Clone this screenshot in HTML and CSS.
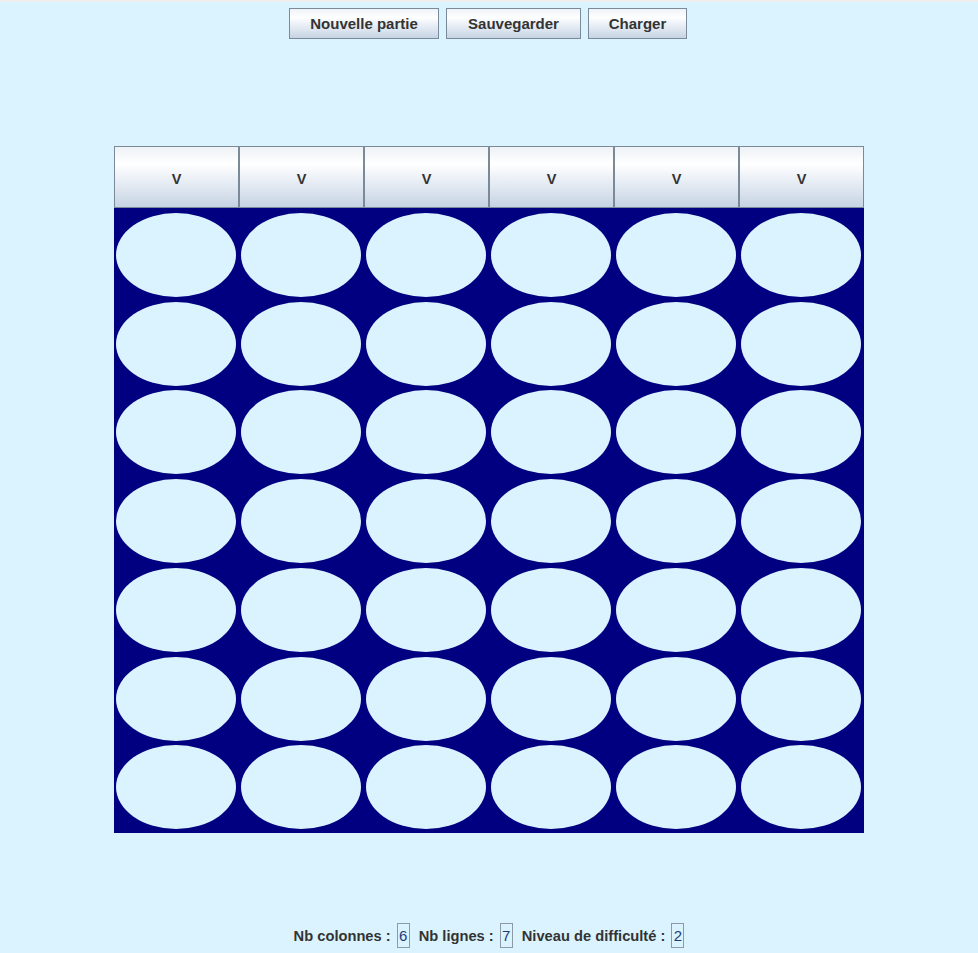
FILE: index.html
```html
<!DOCTYPE html>
<html lang="fr">
<head>
<meta charset="utf-8">
<title>Puissance 4</title>
<link rel="stylesheet" href="styles.css">
</head>
<body>
<div class="strip"></div>
<div class="toolbar">
  <button class="btn btn-new">Nouvelle partie</button>
  <button class="btn btn-save">Sauvegarder</button>
  <button class="btn btn-load">Charger</button>
</div>
<div class="board">
  <div class="header">
    <button class="col-btn">V</button>
    <button class="col-btn">V</button>
    <button class="col-btn">V</button>
    <button class="col-btn">V</button>
    <button class="col-btn">V</button>
    <button class="col-btn">V</button>
  </div>
  <div class="grid">
    <div class="cell"><div class="hole"></div></div><div class="cell"><div class="hole"></div></div><div class="cell"><div class="hole"></div></div><div class="cell"><div class="hole"></div></div><div class="cell"><div class="hole"></div></div><div class="cell"><div class="hole"></div></div>
    <div class="cell"><div class="hole"></div></div><div class="cell"><div class="hole"></div></div><div class="cell"><div class="hole"></div></div><div class="cell"><div class="hole"></div></div><div class="cell"><div class="hole"></div></div><div class="cell"><div class="hole"></div></div>
    <div class="cell"><div class="hole"></div></div><div class="cell"><div class="hole"></div></div><div class="cell"><div class="hole"></div></div><div class="cell"><div class="hole"></div></div><div class="cell"><div class="hole"></div></div><div class="cell"><div class="hole"></div></div>
    <div class="cell"><div class="hole"></div></div><div class="cell"><div class="hole"></div></div><div class="cell"><div class="hole"></div></div><div class="cell"><div class="hole"></div></div><div class="cell"><div class="hole"></div></div><div class="cell"><div class="hole"></div></div>
    <div class="cell"><div class="hole"></div></div><div class="cell"><div class="hole"></div></div><div class="cell"><div class="hole"></div></div><div class="cell"><div class="hole"></div></div><div class="cell"><div class="hole"></div></div><div class="cell"><div class="hole"></div></div>
    <div class="cell"><div class="hole"></div></div><div class="cell"><div class="hole"></div></div><div class="cell"><div class="hole"></div></div><div class="cell"><div class="hole"></div></div><div class="cell"><div class="hole"></div></div><div class="cell"><div class="hole"></div></div>
    <div class="cell"><div class="hole"></div></div><div class="cell"><div class="hole"></div></div><div class="cell"><div class="hole"></div></div><div class="cell"><div class="hole"></div></div><div class="cell"><div class="hole"></div></div><div class="cell"><div class="hole"></div></div>
  </div>
</div>
<div class="footer">
  <span class="label">Nb colonnes :</span><span class="field">6</span>
  <span class="label">Nb lignes :</span><span class="field">7</span>
  <span class="label">Niveau de difficulté :</span><span class="field">2</span>
</div>
</body>
</html>
```
FILE: styles.css
```css
html, body {
  margin: 0;
  padding: 0;
}
body {
  background: #daf3fe;
  height: 953px;
  display: flex;
  flex-direction: column;
  align-items: center;
  font-family: "Liberation Sans", Arial, sans-serif;
  color: #333333;
  overflow: hidden;
}
.strip {
  align-self: stretch;
  height: 2px;
  background: #eeeeee;
}
.toolbar {
  display: flex;
  gap: 7px;
  margin-top: 6px;
  margin-left: -1px;
  margin-right: 1px;
}
.btn, .col-btn {
  box-sizing: border-box;
  border: 1px solid #7a8a99;
  background: linear-gradient(to bottom, #eef2f7 0%, #ffffff 28%, #e6ecf4 60%, #c6d3e3 100%);
  font-family: "Liberation Sans", Arial, sans-serif;
  font-weight: bold;
  color: #333333;
  padding: 0;
  margin: 0;
  border-radius: 0;
}
.btn {
  height: 31px;
  font-size: 15px;
}
.btn-new { width: 150px; }
.btn-save { width: 135px; }
.btn-load { width: 99px; }
.board {
  margin-top: 107px;
  width: 750px;
}
.header {
  display: grid;
  grid-template-columns: repeat(6, 125px);
  height: 62px;
}
.col-btn {
  height: 62px;
  font-size: 14.5px;
  padding-top: 3px;
}
.grid {
  height: 625px;
  box-sizing: border-box;
  padding: 2px 0;
  background: #000080;
  display: grid;
  grid-template-columns: repeat(6, 125px);
  grid-template-rows: repeat(7, 1fr);
}
.cell {
  position: relative;
}
.hole {
  width: 120px;
  height: 84px;
  margin: 3px 0 0 2px;
  border-radius: 50%;
  background: #daf3fe;
}
.footer {
  margin-top: auto;
  margin-bottom: 5px;
  display: flex;
  align-items: center;
  font-size: 14.7px;
  font-weight: bold;
}
.field {
  box-sizing: border-box;
  width: 13px;
  height: 25px;
  border: 1px solid #8c9aa8;
  margin: 0 9px 0 6px;
  font-weight: normal;
  font-size: 15px;
  color: #1e3c78;
  display: flex;
  align-items: center;
  justify-content: center;
}
.field:last-child {
  margin-right: 0;
}
```
